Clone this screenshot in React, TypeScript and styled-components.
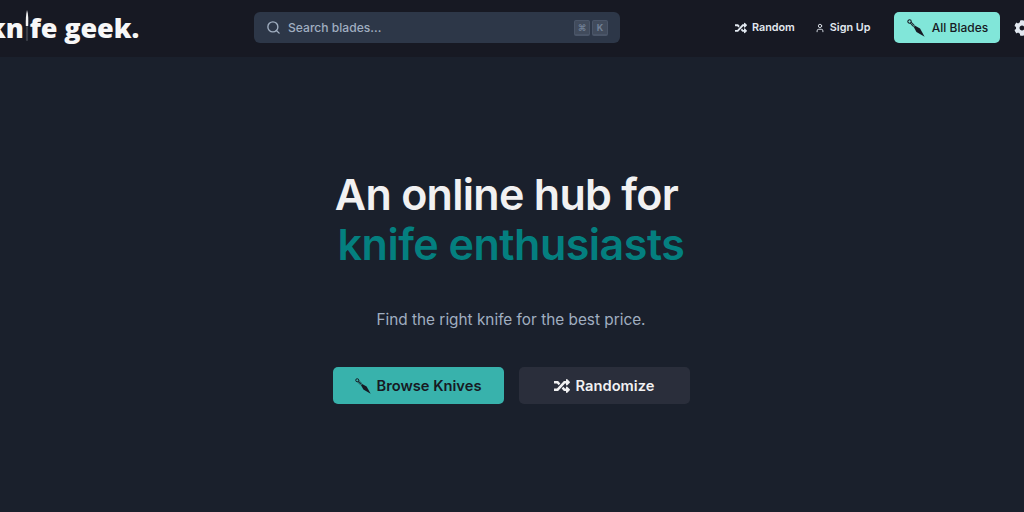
import { createGlobalStyle, styled } from "styled-components";
import { Search, User } from "lucide-react";
import { FaCog, FaRandom } from "react-icons/fa";

const GlobalStyle = createGlobalStyle`
  html, body {
    margin: 0;
    padding: 0;
    width: 1024px;
    height: 512px;
    overflow: hidden;
    background: #1a202c;
  }
  * {
    box-sizing: border-box;
  }
`;

const KnifeIcon = ({ size }: { size: number }) => (
  <svg width={size} height={size} viewBox="0 0 20 20" fill="none">
    <circle cx="2.8" cy="2.8" r="1.9" stroke="currentColor" strokeWidth="1.2" />
    <path d="M4.2 4.2 L8 8" stroke="currentColor" strokeWidth="3" strokeDasharray="1 0.6" />
    <path d="M7.5 9 L9 7.5 L14.5 10.5 L19.6 19.6 L10.5 14.5 Z" fill="currentColor" />
  </svg>
);

export default function App() {
  return (
    <Page>
      <GlobalStyle />
      <Nav>
        <Logo>
          kn
          <LogoBlade viewBox="0 0 6 32" aria-hidden="true">
            <path d="M3 0 C4.4 4 4.4 9 4.2 16 L1.8 16 C1.6 9 2 4 3 0 Z" fill="#f2f2f2" />
            <rect x="1.9" y="16" width="2.2" height="15" rx="1" fill="#3a3e46" />
          </LogoBlade>
          fe geek.
        </Logo>
        <SearchBar>
          <Search size={15} color="#a0aec0" strokeWidth={2.2} />
          <SearchText>Search blades...</SearchText>
          <Keys>
            <Key>⌘</Key>
            <Key>K</Key>
          </Keys>
        </SearchBar>
        <NavActions>
          <NavLink>
            <FaRandom size={12} />
            Random
          </NavLink>
          <NavLink>
            <User size={10} strokeWidth={2.2} />
            Sign Up
          </NavLink>
          <BladesButton>
            <KnifeIcon size={18} />
            All Blades
          </BladesButton>
          <GearWrap>
            <FaCog size={16} />
          </GearWrap>
        </NavActions>
      </Nav>
      <Hero>
        <Title>
          <Lead>An online hub for</Lead>
          <Accent>knife enthusiasts</Accent>
        </Title>
        <Tagline>Find the right knife for the best price.</Tagline>
        <Buttons>
          <PrimaryButton>
            <KnifeIcon size={16} />
            Browse Knives
          </PrimaryButton>
          <SecondaryButton>
            <FaRandom size={16} />
            Randomize
          </SecondaryButton>
        </Buttons>
      </Hero>
    </Page>
  );
}

const Page = styled.div`
  width: 1024px;
  height: 512px;
  overflow: hidden;
  background: #1a202c;
  font-family: Inter, "Liberation Sans", sans-serif;
`;

const Nav = styled.header`
  width: 1050px;
  height: 57px;
  margin-left: -13px;
  padding-bottom: 2px;
  display: flex;
  align-items: center;
  background: #171923;
`;

const Logo = styled.div`
  width: 267px;
  flex: none;
  display: flex;
  align-items: center;
  padding-left: 1px;
  font-family: "Open Sans", sans-serif;
  font-size: 27px;
  font-weight: 800;
  letter-spacing: -0.1px;
  color: #f7f7f7;
  white-space: pre;
`;

const LogoBlade = styled.svg`
  width: 6px;
  height: 32px;
  margin: -3px 0 0 0;
`;

const SearchBar = styled.div`
  width: 366px;
  height: 31px;
  flex: none;
  display: flex;
  align-items: center;
  padding: 0 12px 0 12px;
  background: #2d3748;
  border-radius: 6px;
`;

const SearchText = styled.span`
  margin-left: 7px;
  flex: 1;
  font-size: 12.1px;
  font-weight: 500;
  color: #a0aec0;
`;

const Keys = styled.div`
  display: flex;
  gap: 2px;
`;

const Key = styled.span`
  width: 16px;
  height: 16px;
  display: flex;
  align-items: center;
  justify-content: center;
  font-size: 9px;
  font-weight: 700;
  color: #718096;
  background: #414b5c;
  border: 1px solid #4a5568;
  border-bottom-width: 2px;
  border-radius: 2px;
`;

const NavActions = styled.nav`
  margin-left: 115px;
  display: flex;
  align-items: center;
`;

const NavLink = styled.a`
  display: flex;
  align-items: center;
  gap: 5px;
  margin-right: 20px;
  font-size: 10.8px;
  font-weight: 600;
  color: #e2e8f0;
  white-space: nowrap;
`;

const BladesButton = styled.button`
  width: 106px;
  height: 31px;
  margin-left: 4px;
  display: flex;
  align-items: center;
  justify-content: center;
  gap: 7px;
  padding: 0;
  border: 0;
  border-radius: 5px;
  background: #81e6d9;
  color: #171923;
  font-family: inherit;
  font-size: 12px;
  font-weight: 500;
`;

const GearWrap = styled.span`
  display: flex;
  margin-left: 14px;
  color: #e2e8f0;
`;

const Hero = styled.main`
  display: flex;
  flex-direction: column;
  align-items: center;
  padding: 112px 2px 0 0;
`;

const Title = styled.h1`
  margin: 0;
  text-align: center;
  font-size: 43px;
  font-weight: 600;
  line-height: 50px;
  letter-spacing: -0.5px;
  color: #f1f1f2;
`;

const Lead = styled.span`
  display: block;
  padding-right: 9px;
  letter-spacing: -0.7px;
`;

const Accent = styled.span`
  display: block;
  color: #047f7f;
`;

const Tagline = styled.p`
  margin: 39px 0 0 0;
  font-size: 15.35px;
  line-height: 24px;
  color: #a0aec0;
`;

const Buttons = styled.div`
  margin-top: 35px;
  display: flex;
  gap: 15px;
`;

const HeroButton = styled.button`
  width: 171px;
  height: 37px;
  display: flex;
  align-items: center;
  justify-content: center;
  gap: 6px;
  padding: 0;
  border: 0;
  border-radius: 5px;
  font-family: inherit;
  font-size: 14.7px;
  font-weight: 600;
`;

const PrimaryButton = styled(HeroButton)`
  background: #38b2ac;
  color: #171923;
`;

const SecondaryButton = styled(HeroButton)`
  background: #2a2e3b;
  color: #f1f1f2;
`;
